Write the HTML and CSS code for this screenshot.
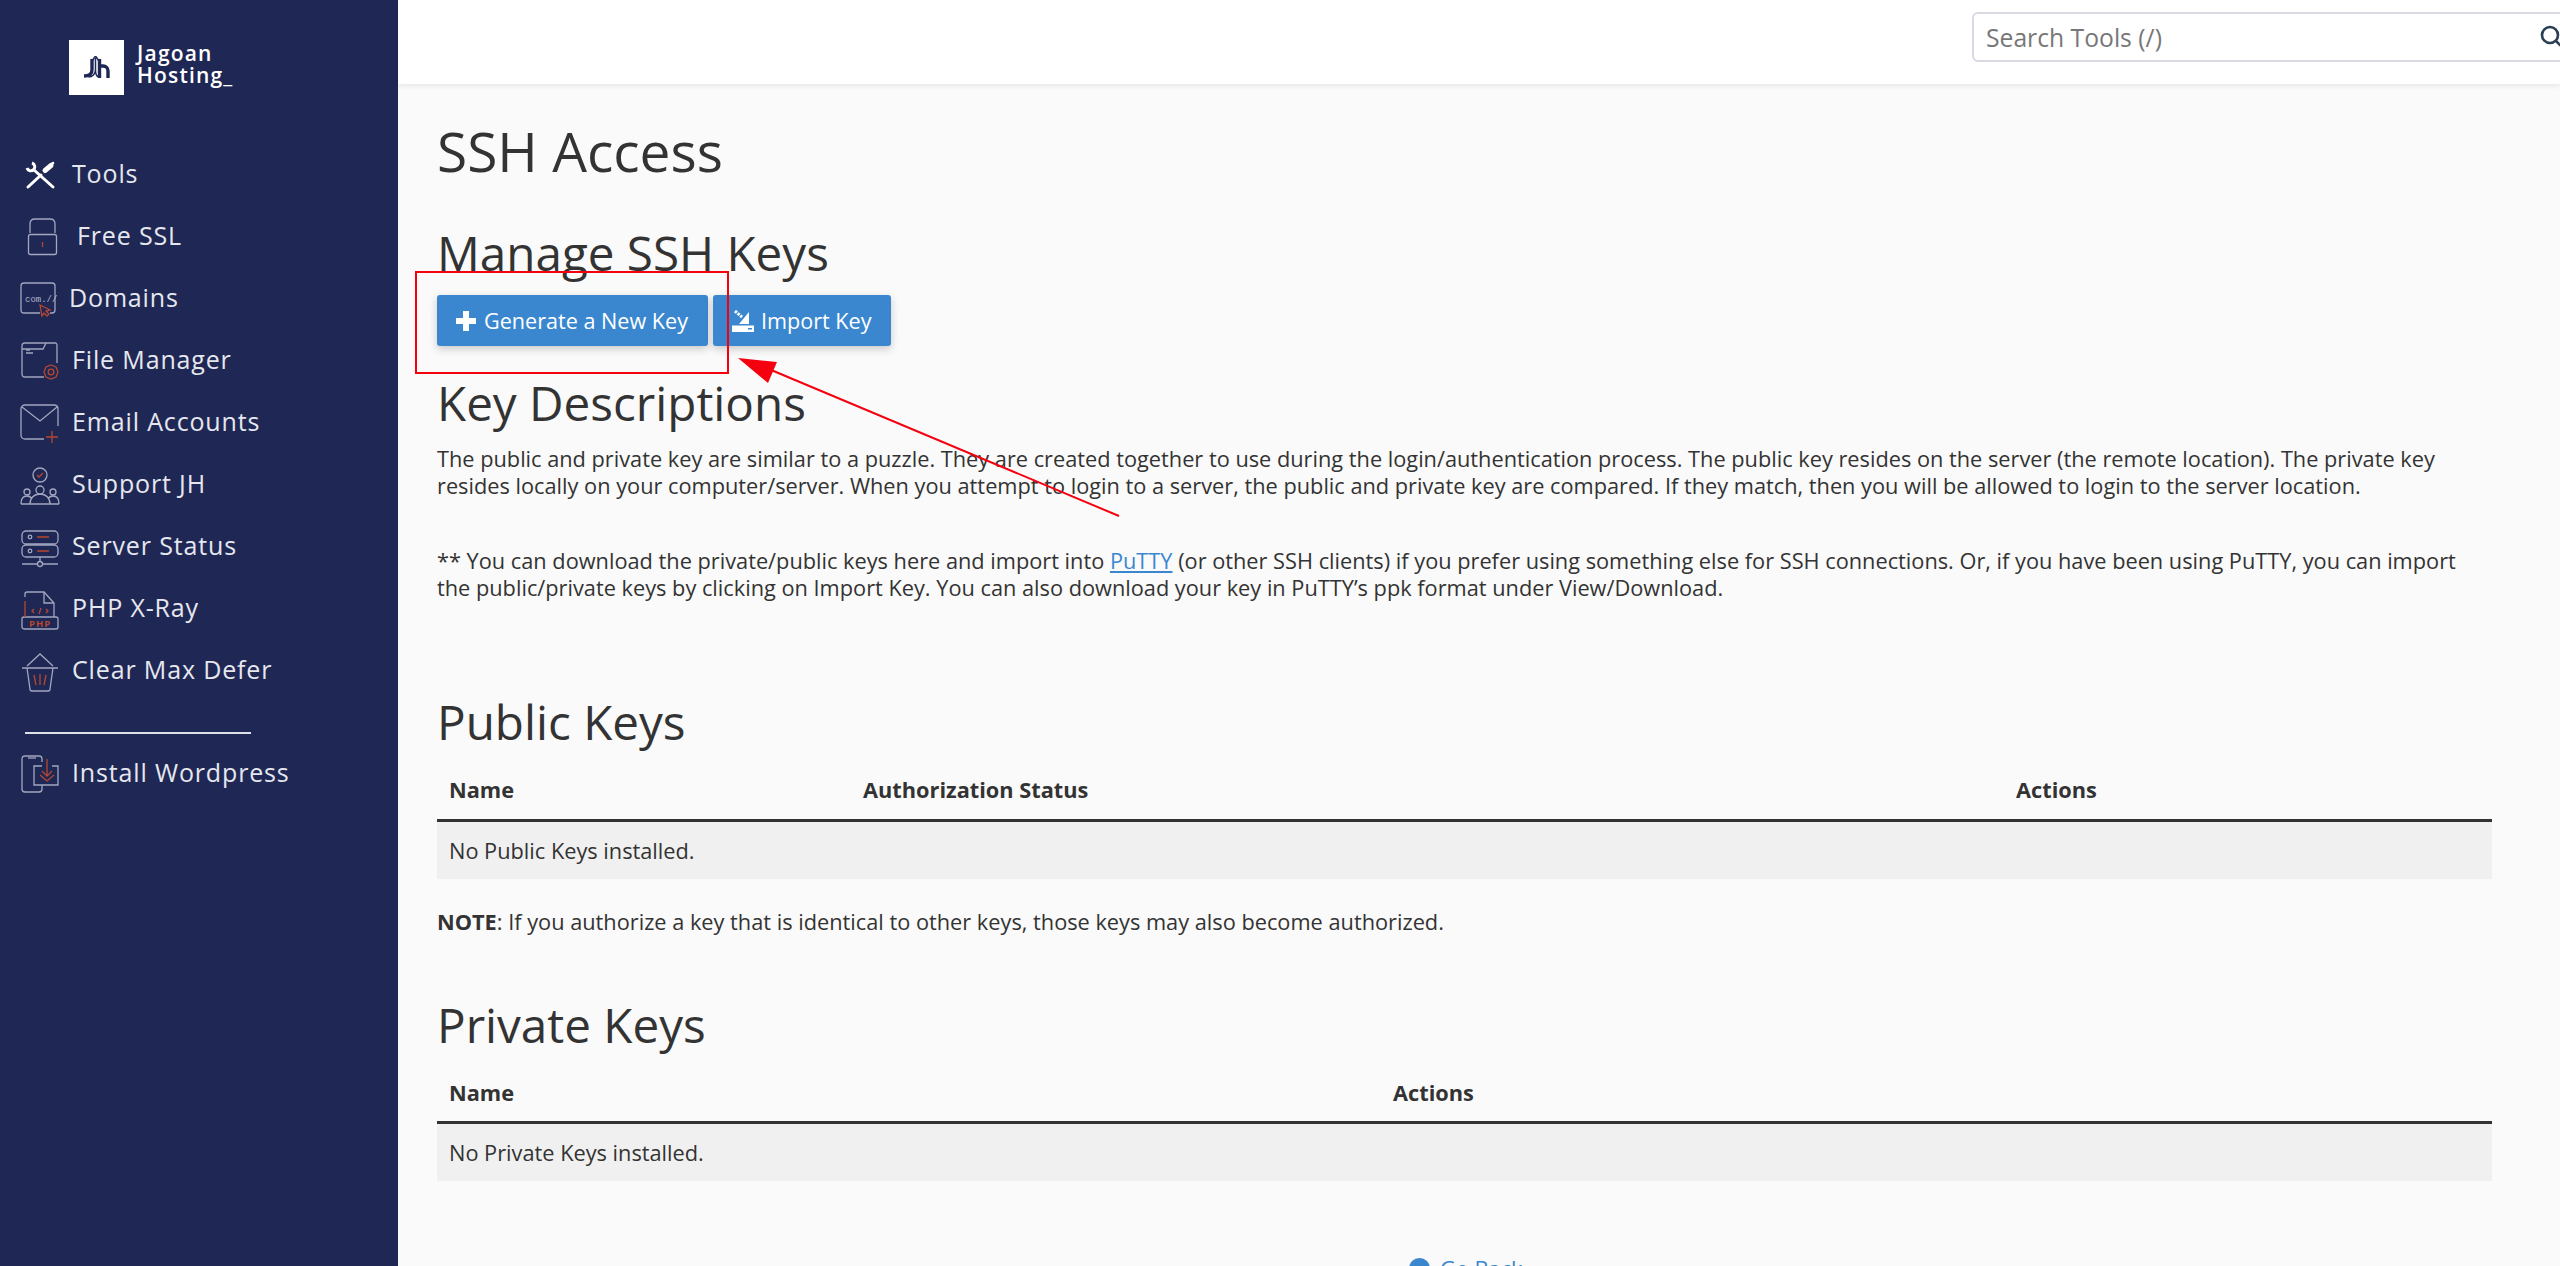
FILE: index.html
```html
<!DOCTYPE html>
<html lang="en">
<head>
    <meta charset="UTF-8">
    <title>SSH Access</title>
    <link rel="stylesheet" href="styles.css">
</head>
<body>
    <div class="layout">
        <aside class="sidebar">
            <div class="brand">
                <div class="brand-logo">
                    <svg width="27" height="23" viewBox="0 0 27 23"><path d="M9 3v11c0 4-3 6-8 6" fill="none" stroke="#1f2755" stroke-width="3.400"/><path d="M16.500 3v19M16.500 10H20c3 0 5 2 5 5v7" fill="none" stroke="#1f2755" stroke-width="3.400"/><path d="M9 5l3.500-5L16 5" fill="none" stroke="#1f2755" stroke-width="1.500"/><path d="M12.500 2v12c0 4-3 7-7 7M12.500 14c0 4 1 7 4 7" fill="none" stroke="#1f2755" stroke-width="1.500"/></svg>
                </div>
                <div class="brand-name">Jagoan<br>Hosting_</div>
            </div>
            <nav class="nav">
                <a class="nav-item">
                    <svg class="nav-icon" viewBox="0 0 44 44"><path d="M12 12A4 4 0 1 1 7 17" fill="none" stroke="#fff" stroke-width="3"/><path d="M14 19l19 17" fill="none" stroke="#fff" stroke-width="3" stroke-linecap="round"/><path d="M8 36l13-12" fill="none" stroke="#fff" stroke-width="3" stroke-linecap="round"/><path d="M25 19.500l6-5" fill="none" stroke="#fff" stroke-width="5" stroke-linecap="round"/><path d="M30 15l3-3" fill="none" stroke="#fff" stroke-width="2.500" stroke-linecap="round"/></svg>
                    <span class="nav-label">Tools</span>
                </a>
                <a class="nav-item">
                    <svg class="nav-icon" viewBox="0 0 44 44"><g class="ln"><rect x="8.500" y="21.500" width="28" height="20" rx="2"/><path d="M10 20v-9c0-3 2-5 5-5h15c3 0 5 2 5 5v9"/></g><path class="rd" d="M22.500 29v5"/></svg>
                    <span class="nav-label nav-label-ssl">Free SSL</span>
                </a>
                <a class="nav-item">
                    <svg class="nav-icon" viewBox="0 0 44 44"><g class="ln"><path d="M20 38H4c-2 0-3-1-3-3V11c0-2 1-3 3-3h28c2 0 3 1 3 3v24c0 2-1 3-3 3h-2"/></g><text x="5" y="27" class="ico-txt">com.//</text><path class="rd" d="M20 30l10 5-4 1 3 3-2 2-3-3-2 3z"/></svg>
                    <span class="nav-label nav-label-dom">Domains</span>
                </a>
                <a class="nav-item">
                    <svg class="nav-icon" viewBox="0 0 44 44"><g class="ln"><path d="M24 40H5c-2 0-3-1-3-3V9c0-2 1-3 3-3h30c2 0 2 1 2 3v17"/><path d="M2 12h21l3-6"/><path d="M6 16h7M6 13h4"/></g><g class="rd"><circle cx="31" cy="35" r="2.800"/><path d="M31 28l5 2 2 5-2 5-5 2-5-2-2-5 2-5z"/></g></svg>
                    <span class="nav-label">File Manager</span>
                </a>
                <a class="nav-item">
                    <svg class="nav-icon" viewBox="0 0 44 44"><g class="ln"><path d="M24 40H5c-2 0-4-1-4-4V10c0-3 2-4 4-4h29c2 0 4 1 4 4v17"/><path d="M2 8l18 14 17-14"/></g><path class="rd" d="M32 32v12M26 38h12"/></svg>
                    <span class="nav-label">Email Accounts</span>
                </a>
                <a class="nav-item">
                    <svg class="nav-icon" viewBox="0 0 44 44"><g class="ln"><circle cx="20" cy="14" r="7"/><circle cx="20" cy="29" r="4"/><circle cx="7" cy="31" r="3"/><circle cx="33" cy="31" r="3"/><path d="M1 43c0-6 3-8 6-8 2 0 4 1 5 3M39 43c0-6-3-8-6-8-2 0-4 1-5 3M10 43c0-6 4-10 10-10s10 4 10 10M1 43h38"/></g><path class="rd" d="M17 14l2 2 4-4"/></svg>
                    <span class="nav-label">Support JH</span>
                </a>
                <a class="nav-item">
                    <svg class="nav-icon" viewBox="0 0 44 44"><g class="ln"><rect x="2" y="8" width="36" height="13" rx="4"/><rect x="2" y="22" width="36" height="12" rx="4"/><circle cx="10" cy="14" r="1.800"/><circle cx="10" cy="28" r="1.800"/><path d="M20 34v5M2 41h15M23 41h15"/><circle cx="20" cy="41" r="2.500"/></g><path class="rd" d="M17 14h12M17 28h12"/></svg>
                    <span class="nav-label">Server Status</span>
                </a>
                <a class="nav-item">
                    <svg class="nav-icon" viewBox="0 0 44 44"><g class="ln"><path d="M5 12V9c0-1 1-2 2-2h17l10 11v14"/><path d="M24 7v11h10"/><rect x="2" y="32" width="36" height="12" rx="2"/></g><path class="rd" d="M5 16v16M14 24l-2 2 2 2M26 24l2 2-2 2M21 23l-2 6"/><text x="9" y="42" class="ico-php">PHP</text></svg>
                    <span class="nav-label">PHP X-Ray</span>
                </a>
                <a class="nav-item">
                    <svg class="nav-icon" viewBox="0 0 44 44"><g class="ln"><path d="M7 19L20 7l13 12M2 21h36M7 21l3 21c0 1 1 2 2 2h16c1 0 2-1 2-2l3-21"/></g><path class="rd" d="M14 28l2 10M20 27v11M26 28l-2 10"/></svg>
                    <span class="nav-label">Clear Max Defer</span>
                </a>
            </nav>
            <div class="nav-divider"></div>
            <a class="nav-item">
                <svg class="nav-icon" viewBox="0 0 44 44"><g class="ln"><path d="M22 12V9c0-2-1-3-3-3H5C3 6 2 7 2 9v30c0 2 1 3 3 3h14c2 0 3-1 3-3v-4"/><path d="M8 8h8"/><path d="M22 16h-8v19h24V16h-6"/></g><path class="rd" d="M27 9v17M22 21l5 5 5-5M20 25l7 6 7-6"/></svg>
                <span class="nav-label">Install Wordpress</span>
            </a>
        </aside>

        <div class="page">
            <header class="topbar">
                <div class="search">
                    <span class="search-text">Search Tools (/)</span>
                    <svg class="search-icon" width="24" height="24" viewBox="0 0 24 24"><circle cx="10" cy="10" r="8" fill="none" stroke="#2a3f55" stroke-width="2.600"/><path d="M16 16l7 7" stroke="#2a3f55" stroke-width="2.600"/></svg>
                </div>
            </header>

            <main class="content">
                <h1>SSH Access</h1>
                <h2 class="manage-title">Manage SSH Keys</h2>
                <div class="actions">
                    <a class="btn btn-generate">
                        <svg width="20" height="20" viewBox="0 0 20 20"><path d="M10 0v20M0 10h20" stroke="#fff" stroke-width="6"/></svg>
                        Generate a New Key
                    </a>
                    <a class="btn btn-import">
                        <svg width="22" height="22" viewBox="0 0 22 22"><path d="M3 1l7 6" stroke="#fff" stroke-width="3" stroke-dasharray="2.500 1"/><path d="M17 2v12H7z" fill="#fff"/><path fill-rule="evenodd" d="M0 15.500h22V22H0zM16 18v1.500h4V18z" fill="#fff"/></svg>
                        Import Key
                    </a>
                </div>

                <h2 class="desc-title">Key Descriptions</h2>
                <p class="desc desc-first">The public and private key are similar to a puzzle. They are created together to use during the login/authentication process. The public key resides on the server (the remote location). The private key resides locally on your computer/server. When you attempt to login to a server, the public and private key are compared. If they match, then you will be allowed to login to the server location.</p>
                <p class="desc desc-putty">** You can download the private/public keys here and import into <a class="link" href="#">PuTTY</a> (or other SSH clients) if you prefer using something else for SSH connections. Or, if you have been using PuTTY, you can import the public/private keys by clicking on Import Key. You can also download your key in PuTTY’s ppk format under View/Download.</p>

                <h2 class="public-title">Public Keys</h2>
                <table class="keys keys-public">
                    <thead>
                        <tr><th class="col-name">Name</th><th class="col-auth">Authorization Status</th><th>Actions</th></tr>
                    </thead>
                    <tbody>
                        <tr><td colspan="3">No Public Keys installed.</td></tr>
                    </tbody>
                </table>
                <p class="note"><strong>NOTE</strong>: If you authorize a key that is identical to other keys, those keys may also become authorized.</p>

                <h2 class="private-title">Private Keys</h2>
                <table class="keys keys-private">
                    <thead>
                        <tr><th class="col-priv">Name</th><th>Actions</th></tr>
                    </thead>
                    <tbody>
                        <tr><td colspan="2">No Private Keys installed.</td></tr>
                    </tbody>
                </table>

                <div class="back">
                    <span class="back-dot"></span>
                    <a class="back-link">Go Back</a>
                </div>
            </main>
        </div>
    </div>

    <!-- annotation drawn over the page -->
    <div class="mark-box"></div>
    <svg class="mark-arrow" width="400" height="170" viewBox="0 0 400 170"><path d="M385 161L30 12" stroke="#f5000f" stroke-width="2" fill="none"/><path d="M4 3L43 7 34 28z" fill="#f5000f"/></svg>
</body>
</html>
```

FILE: styles.css
```css
html, body {
    margin: 0;
    padding: 0;
    height: 1266px;
    overflow: hidden;
}
body {
    font-family: 'Open Sans', sans-serif;
    background: #fafafa;
    color: #333;
    position: relative;
}
.layout {
    display: flex;
    height: 1266px;
}

/* sidebar */
.sidebar {
    width: 398px;
    flex-shrink: 0;
    background: #1f2755;
    color: #e6e7ee;
}
.brand {
    display: flex;
    align-items: flex-start;
    padding: 40px 0 0 69px;
    height: 142px;
    box-sizing: border-box;
}
.brand-logo {
    width: 55px;
    height: 55px;
    background: #fff;
    display: flex;
    align-items: center;
    justify-content: center;
}
.brand-name {
    margin: 2px 0 0 13px;
    font-size: 21px;
    line-height: 22px;
    font-weight: 600;
    letter-spacing: 1.2px;
    color: #fff;
}
.nav-item {
    display: flex;
    align-items: center;
    height: 62px;
    padding-left: 20px;
}
.nav-icon {
    width: 44px;
    height: 44px;
    flex-shrink: 0;
    overflow: visible;
}
.nav-label {
    margin-left: 8px;
    font-size: 25px;
    letter-spacing: 0.85px;
    color: #e6e7ee;
}
.nav-label-ssl {
    margin-left: 13px;
}
.nav-label-dom {
    margin-left: 5px;
}
.nav-divider {
    width: 226px;
    height: 2px;
    background: #dfe1ea;
    margin: 32px 0 7px 25px;
}
.ln {
    fill: none;
    stroke: #a3a7c0;
    stroke-width: 1.3;
}
.rd {
    fill: none;
    stroke: #b5482f;
    stroke-width: 1.3;
}
.ico-txt {
    font-family: 'Liberation Mono', monospace;
    font-size: 9px;
    fill: #b4b8cc;
}
.ico-php {
    font-family: 'Open Sans', sans-serif;
    font-size: 9.500px;
    font-weight: 700;
    letter-spacing: 1px;
    fill: #b5482f;
}

/* top bar */
.page {
    flex: 1;
    min-width: 0;
}
.topbar {
    height: 84px;
    background: #fff;
    box-shadow: 0 2px 5px rgba(0, 0, 0, 0.08);
    padding: 12px 0 0 1574px;
    box-sizing: border-box;
}
.search {
    width: 600px;
    height: 50px;
    box-sizing: border-box;
    border: 2px solid #d8d9e3;
    border-radius: 6px;
    background: #fff;
    display: flex;
    align-items: center;
    justify-content: space-between;
    padding: 0 6px 0 12px;
}
.search-text {
    font-size: 24.700px;
    color: #777;
}

/* content */
.content {
    padding: 0 0 0 39px;
    width: 2055px;
}
h1 {
    font-size: 55px;
    font-weight: 400;
    line-height: 70px;
    margin: 32px 0 0;
}
h2 {
    font-size: 47.600px;
    font-weight: 400;
    line-height: 60px;
    margin: 0;
}
.manage-title {
    margin-top: 37px;
}
.actions {
    display: flex;
    gap: 5px;
    margin-top: 12px;
}
.btn {
    height: 51px;
    box-sizing: border-box;
    background: #3a87d0;
    border-radius: 3px;
    color: #fff;
    font-size: 21.600px;
    display: flex;
    align-items: center;
    box-shadow: 0 3px 8px rgba(0, 0, 0, 0.2);
}
.btn-generate {
    width: 271px;
    padding-left: 19px;
    gap: 8px;
}
.btn-import {
    width: 178px;
    padding-left: 19px;
    gap: 7px;
}
.desc-title {
    margin-top: 27px;
}
.desc {
    font-size: 21.750px;
    line-height: 27px;
    margin: 0;
}
.desc-first {
    margin-top: 12px;
}
.desc-putty {
    margin-top: 48px;
}
.link {
    color: #3a87d0;
}
.public-title {
    margin-top: 91px;
}
.keys {
    width: 100%;
    border-collapse: collapse;
    font-size: 21.750px;
}
.keys th {
    text-align: left;
    font-weight: 700;
    height: 61px;
    padding: 2px 12px 0;
    border-bottom: 3px solid #333;
    box-sizing: border-box;
}
.keys td {
    background: #f0f0f0;
    height: 57px;
    padding: 0 12px;
}
.keys-public {
    margin-top: 7px;
}
.col-name {
    width: 414px;
}
.col-auth {
    width: 1153px;
}
.col-priv {
    width: 944px;
}
.note {
    font-size: 21.750px;
    line-height: 27px;
    margin: 29px 0 0;
}
.private-title {
    margin-top: 60px;
}
.keys-private {
    margin-top: 7px;
}
.back {
    display: flex;
    align-items: center;
    gap: 10px;
    margin: 73px 0 0 972px;
}
.back-dot {
    width: 21px;
    height: 21px;
    border-radius: 50%;
    background: #3a87d0;
}
.back-link {
    font-size: 21.750px;
    color: #3a87d0;
}

/* red annotation */
.mark-box {
    position: absolute;
    left: 415px;
    top: 271px;
    width: 314px;
    height: 103px;
    box-sizing: border-box;
    border: 2px solid #f5000f;
}
.mark-arrow {
    position: absolute;
    left: 734px;
    top: 355px;
}
```
